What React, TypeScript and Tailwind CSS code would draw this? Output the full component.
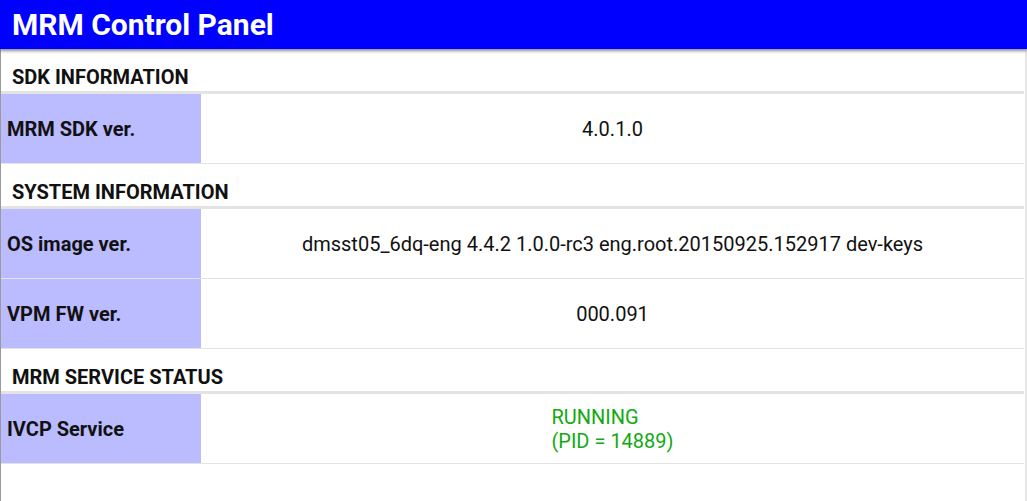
import React from "react";

function Section({ title }: { title: string }) {
  return (
    <div className="h-[45px] flex flex-col">
      <div className="h-[42px] flex items-center pt-[14px] pl-[11px] text-[20px] font-bold text-[#111]">{title}</div>
      <div className="h-[3px] bg-[#e3e3e3]" />
    </div>
  );
}

function Row({ label, children }: { label: string; children: React.ReactNode }) {
  return (
    <div className="flex flex-col">
      <div className="h-[69px] flex">
        <div className="w-[200px] bg-[#bbbbff] flex items-center pl-[6px] text-[20px] font-bold text-[#111]">{label}</div>
        <div className="flex-1 flex items-center justify-center text-[20px] text-[#111]">{children}</div>
      </div>
      <div className="h-[1px] bg-[#e3e3e3]" />
    </div>
  );
}

export default function App() {
  return (
    <div className="w-[1027px] h-[501px] bg-white flex flex-col overflow-hidden" style={{ fontFamily: "Roboto, 'Liberation Sans', sans-serif" }}>
      <div className="h-[49px] bg-[#0000ff] text-white text-[30px] font-bold pl-[12px] flex items-center relative z-10 shadow-[0_2px_3px_rgba(0,0,0,0.45)]">
        MRM Control Panel
      </div>
      <div className="flex-1 flex border-l border-[#9a9a9a]">
        <div className="flex-1 flex flex-col mr-[1px]">
          <Section title="SDK INFORMATION" />
          <Row label="MRM SDK ver.">4.0.1.0</Row>
          <Section title="SYSTEM INFORMATION" />
          <Row label="OS image ver.">dmsst05_6dq-eng 4.4.2 1.0.0-rc3 eng.root.20150925.152917 dev-keys</Row>
          <Row label="VPM FW ver.">000.091</Row>
          <Section title="MRM SERVICE STATUS" />
          <Row label="IVCP Service">
            <div className="text-[#11aa11] leading-[24px] pt-[1px]">
              <div>RUNNING</div>
              <div>(PID = 14889)</div>
            </div>
          </Row>
        </div>
        <div className="w-[2px] bg-[#e6e6e6]" />
      </div>
    </div>
  );
}
